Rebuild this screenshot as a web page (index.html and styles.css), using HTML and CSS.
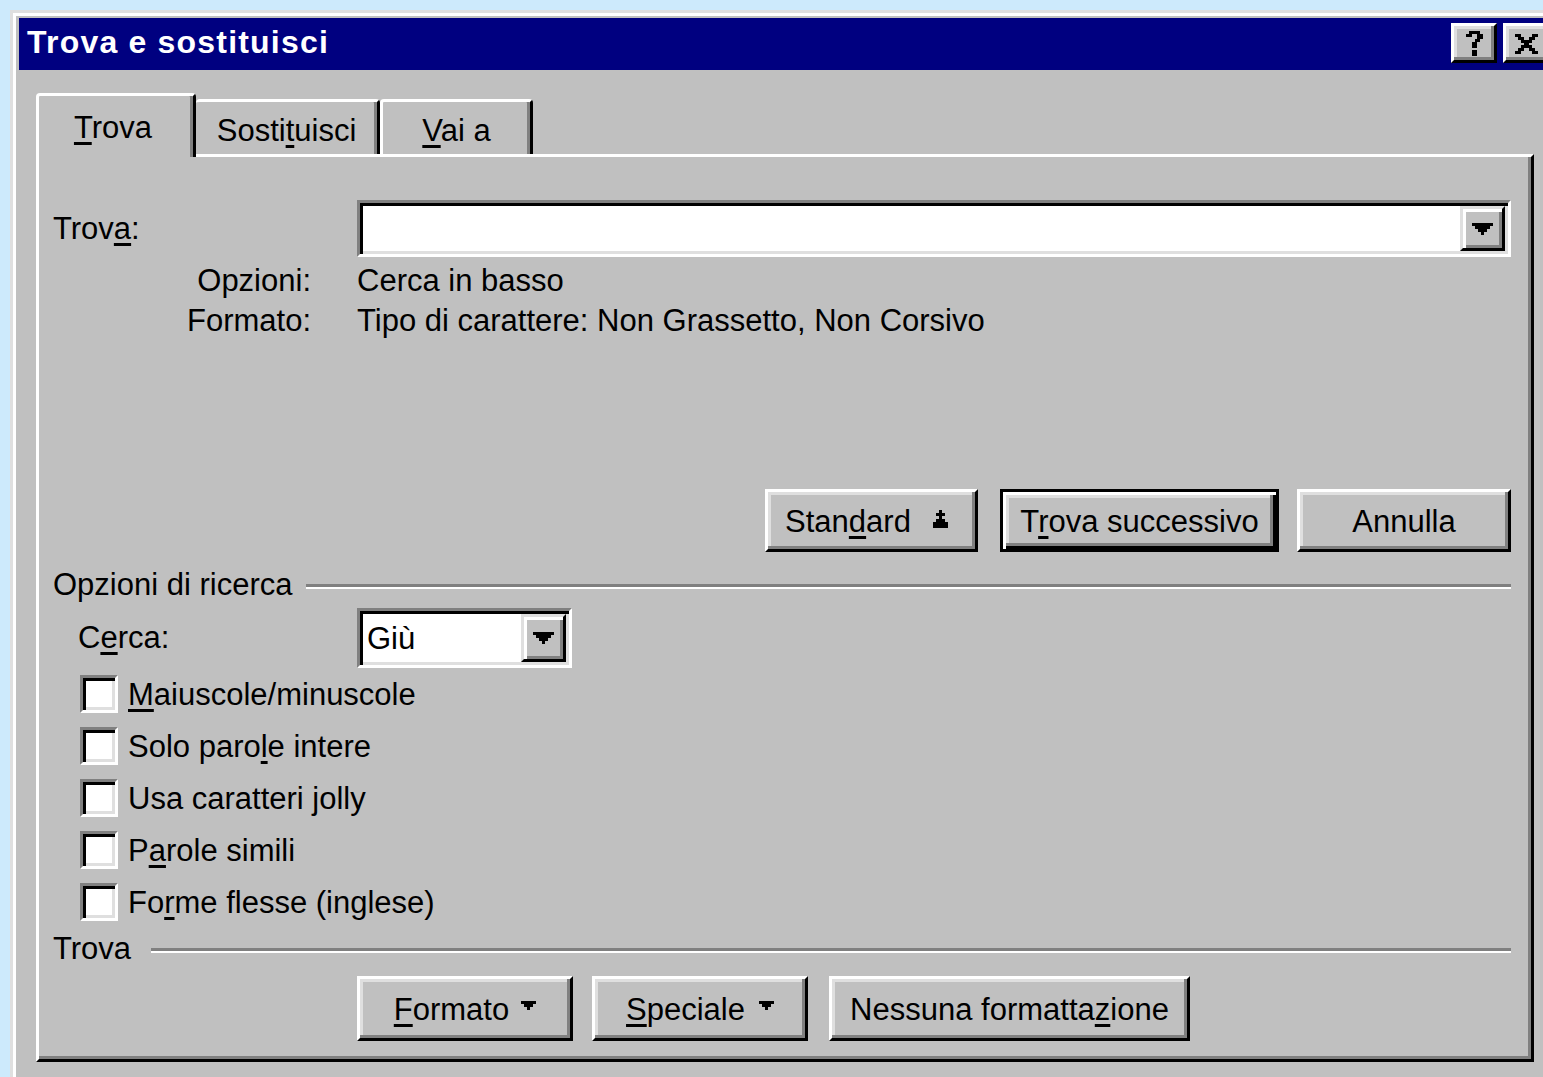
FILE: index.html
```html
<!DOCTYPE html>
<html lang="it">
<head>
<meta charset="utf-8">
<title>Trova e sostituisci</title>
<link rel="stylesheet" href="styles.css">
</head>
<body>
<div class="dialog">
  <div class="titlebar">
    <span class="title">Trova e sostituisci</span>
    <div class="caption-btns">
      <button class="cap-btn raised" type="button" aria-label="Guida">
        <svg class="glyph-help" viewBox="0 0 6 9" width="17" height="25" shape-rendering="crispEdges"><path d="M1 0h4v1h-4zM0 1h2v1h-2zM4 1h2v2h-2zM3 3h2v1h-2zM2 4h2v2h-2zM2 7h2v2h-2z" fill="#000"/></svg>
      </button>
      <button class="cap-btn raised" type="button" aria-label="Chiudi">
        <svg class="glyph-close" viewBox="0 0 8 7" width="23" height="20" shape-rendering="crispEdges"><path d="M0 0h2v1h-2zM6 0h2v1h-2zM1 1h2v1h-2zM5 1h2v1h-2zM2 2h4v1h-4zM3 3h2v1h-2zM2 4h4v1h-4zM1 5h2v1h-2zM5 5h2v1h-2zM0 6h2v1h-2zM6 6h2v1h-2z" fill="#000"/></svg>
      </button>
    </div>
  </div>

  <div class="dlg-body">
    <div class="tabs">
      <div class="tab tab-active"><u class="mn">T</u>rova</div>
      <div class="tab tab-sost">Sosti<u class="mn">t</u>uisci</div>
      <div class="tab tab-vai"><u class="mn">V</u>ai a</div>
    </div>

    <div class="panel">
      <div class="find-row">
        <span class="lbl">Trov<u class="mn">a</u>:</span>
        <div class="combo combo-find">
          <span class="combo-text"></span>
          <span class="drop">
            <svg viewBox="0 0 7 4" width="21" height="12" shape-rendering="crispEdges"><path d="M0 0h7v1h-7zM1 1h5v1h-5zM2 2h3v1h-3zM3 3h1v1h-1z" fill="#000"/></svg>
          </span>
        </div>
      </div>

      <div class="info">
        <span class="info-k">Opzioni:</span><span>Cerca in basso</span>
        <span class="info-k">Formato:</span><span>Tipo di carattere: Non Grassetto, Non Corsivo</span>
      </div>

      <div class="actions">
        <button class="btn raised btn-std" type="button">
          <span>Stan<u class="mn">d</u>ard</span>
          <svg viewBox="0 0 5 6" width="15" height="18" shape-rendering="crispEdges"><path d="M2 0h1v1h-1zM1 1h3v1h-3zM2 2h1v1h-1zM1 3h3v1h-3zM0 4h5v2h-5z" fill="#000"/></svg>
        </button>
        <button class="btn btn-default btn-next" type="button"><span>T<u class="mn">r</u>ova successivo</span></button>
        <button class="btn raised btn-cancel" type="button"><span>Annulla</span></button>
      </div>

      <div class="group group-options">
        <span>Opzioni di ricerca</span>
        <span class="group-rule"></span>
      </div>

      <div class="search-row">
        <span class="lbl lbl-indent">C<u class="mn">e</u>rca:</span>
        <div class="combo combo-dir">
          <span class="combo-text">Giù</span>
          <span class="drop">
            <svg viewBox="0 0 7 4" width="21" height="12" shape-rendering="crispEdges"><path d="M0 0h7v1h-7zM1 1h5v1h-5zM2 2h3v1h-3zM3 3h1v1h-1z" fill="#000"/></svg>
          </span>
        </div>
      </div>

      <ul class="checks">
        <li class="check"><span class="box"></span><span><u class="mn">M</u>aiuscole/minuscole</span></li>
        <li class="check"><span class="box"></span><span>Solo paro<u class="mn">l</u>e intere</span></li>
        <li class="check"><span class="box"></span><span>Usa caratteri <u class="mn">j</u>olly</span></li>
        <li class="check"><span class="box"></span><span>P<u class="mn">a</u>role simili</span></li>
        <li class="check"><span class="box"></span><span>Fo<u class="mn">r</u>me flesse (inglese)</span></li>
      </ul>

      <div class="group group-find">
        <span>Trova</span>
        <span class="group-rule"></span>
      </div>

      <div class="bottom-btns">
        <button class="btn raised btn-fmt" type="button">
          <span><u class="mn">F</u>ormato</span>
          <svg viewBox="0 0 5 3" width="15" height="9" shape-rendering="crispEdges"><path d="M0 0h5v1h-5zM1 1h3v1h-3zM2 2h1v1h-1z" fill="#000"/></svg>
        </button>
        <button class="btn raised btn-spec" type="button">
          <span><u class="mn">S</u>peciale</span>
          <svg viewBox="0 0 5 3" width="15" height="9" shape-rendering="crispEdges"><path d="M0 0h5v1h-5zM1 1h3v1h-3zM2 2h1v1h-1z" fill="#000"/></svg>
        </button>
        <button class="btn raised btn-none" type="button"><span>Nessuna formatta<u class="mn">z</u>ione</span></button>
      </div>
    </div>
  </div>
</div>
</body>
</html>
```

FILE: styles.css
```css
* {
  box-sizing: border-box;
}

html,
body {
  margin: 0;
}

body {
  height: 100vh;
  overflow: hidden;
  background: #cdeafc;
  font-family: "Liberation Sans", Arial, sans-serif;
  font-size: 31px;
  color: #000;
}

/* mnemonic underline */
.mn {
  text-decoration: underline;
  text-decoration-thickness: 3px;
  text-underline-offset: 4px;
}

/* window frame */
.dialog {
  margin: 10px 0 0 10px;
  width: 1565px;
  height: 1100px;
  background: #c0c0c0;
  border: 3px solid;
  border-color: #dfdfdf #000 #000 #dfdfdf;
  box-shadow: inset 3px 3px 0 #fff;
  padding: 5px 6px 0 6px;
}

.titlebar {
  height: 52px;
  background: #000080;
  display: flex;
  align-items: flex-start;
  padding: 0 17px 0 8px;
}

.title {
  color: #fff;
  font-weight: bold;
  font-size: 32px;
  line-height: 48px;
  letter-spacing: 1.2px;
  white-space: nowrap;
}

.caption-btns {
  margin-left: auto;
  margin-top: 5px;
  display: flex;
  gap: 6px;
}

/* 3D raised bevel shared by push buttons */
.raised {
  background: #c0c0c0;
  border: 3px solid;
  border-color: #fff #000 #000 #fff;
  box-shadow: inset -3px -3px 0 #808080, inset 3px 3px 0 #dfdfdf;
}

.cap-btn {
  width: 46px;
  height: 40px;
  padding: 0;
  display: flex;
  align-items: center;
  justify-content: center;
}

.glyph-close {
  margin-top: 2px;
}

.dlg-body {
  padding-top: 23px;
}

/* tab strip */
.tabs {
  display: flex;
  align-items: flex-end;
  height: 61px;
  margin-left: 17px;
  position: relative;
  z-index: 1;
}

.tab {
  height: 55px;
  padding-top: 12px;
  line-height: 34px;
  text-align: center;
  background: #c0c0c0;
  border-top: 3px solid #fff;
  border-left: 3px solid #fff;
  border-right: 3px solid #000;
  border-radius: 4px 4px 0 0;
  box-shadow: inset -3px 0 0 #808080;
  white-space: nowrap;
}

.tab-active {
  width: 160px;
  height: 64px;
  margin-bottom: -3px;
  padding-top: 15px;
  padding-right: 6px;
}

.tab-sost {
  width: 184px;
  border-left: 0;
}

.tab-vai {
  width: 153px;
}

/* page of the tab control */
.panel {
  width: 1498px;
  height: 908px;
  margin-left: 17px;
  background: #c0c0c0;
  border: 3px solid;
  border-color: #fff #000 #000 #fff;
  box-shadow: inset -3px -3px 0 #808080;
  padding: 43px 20px 0 14px;
}

.find-row,
.search-row {
  display: grid;
  grid-template-columns: 304px auto;
  align-items: center;
  line-height: 34px;
}

.lbl-indent {
  padding-left: 25px;
}

/* sunken combo box */
.combo {
  display: flex;
  background: #fff;
  border: 3px solid;
  border-color: #808080 #fff #fff #808080;
  box-shadow: inset 3px 3px 0 #000, inset -3px -3px 0 #dfdfdf;
  padding: 3px;
}

.combo-find {
  height: 57px;
}

.combo-dir {
  width: 215px;
  height: 60px;
}

.combo-text {
  flex: 1;
  padding-left: 4px;
  padding-top: 2px;
  display: flex;
  align-items: center;
}

.drop {
  width: 45px;
  background: #c0c0c0;
  border: 3px solid;
  border-color: #dfdfdf #000 #000 #dfdfdf;
  box-shadow: inset 3px 3px 0 #fff, inset -3px -3px 0 #808080;
  display: flex;
  align-items: center;
  justify-content: center;
}

.info {
  display: grid;
  grid-template-columns: 304px auto;
  margin-top: 4px;
  line-height: 40px;
}

.info-k {
  text-align: right;
  padding-right: 46px;
}

/* push buttons */
.btn {
  font: inherit;
  color: inherit;
  line-height: 34px;
  padding: 2px 0 0;
  display: flex;
  align-items: center;
  justify-content: center;
  white-space: nowrap;
  cursor: default;
}

.btn-default {
  background: #c0c0c0;
  border: 3px solid #000;
  box-shadow: inset 3px 3px 0 #fff, inset -3px -3px 0 #000, inset -6px -6px 0 #808080, inset 6px 6px 0 #dfdfdf;
}

.actions {
  display: flex;
  justify-content: flex-end;
  margin-top: 148px;
}

.actions .btn {
  height: 63px;
}

.btn-std {
  width: 213px;
  margin-right: 22px;
  gap: 22px;
  padding-right: 10px;
}

.btn-std svg {
  margin-top: -6px;
}

.btn-next {
  width: 279px;
  margin-right: 18px;
}

.btn-cancel {
  width: 214px;
}

/* titled group separators */
.group {
  display: flex;
  align-items: center;
  height: 38px;
  line-height: 38px;
  white-space: nowrap;
}

.group-options {
  margin-top: 14px;
}

.group-find {
  margin-top: 2px;
}

.group-rule {
  flex: 1;
  height: 5px;
  margin: 2px 0 0 14px;
  border-top: 3px solid #808080;
  border-bottom: 2px solid #fff;
}

.group-find .group-rule {
  margin-left: 20px;
}

.search-row {
  margin-top: 4px;
}

/* check boxes */
.checks {
  list-style: none;
  margin: 0;
  padding: 0 0 0 27px;
}

.check {
  display: flex;
  align-items: center;
  gap: 10px;
  height: 52px;
  line-height: 34px;
  padding-top: 2px;
  white-space: nowrap;
}

.box {
  width: 38px;
  height: 38px;
  flex: none;
  margin-top: -2px;
  background: #fff;
  border: 3px solid;
  border-color: #808080 #fff #fff #808080;
  box-shadow: inset 3px 3px 0 #000, inset -3px -3px 0 #dfdfdf;
}

.bottom-btns {
  display: flex;
  margin: 8px 0 0 304px;
}

.bottom-btns .btn {
  height: 65px;
}

.btn-fmt {
  width: 216px;
  margin-right: 19px;
  gap: 12px;
}

.btn-spec {
  width: 216px;
  margin-right: 21px;
  gap: 14px;
}

.btn-fmt svg,
.btn-spec svg {
  margin-top: -8px;
}

.btn-none {
  width: 361px;
}
```
